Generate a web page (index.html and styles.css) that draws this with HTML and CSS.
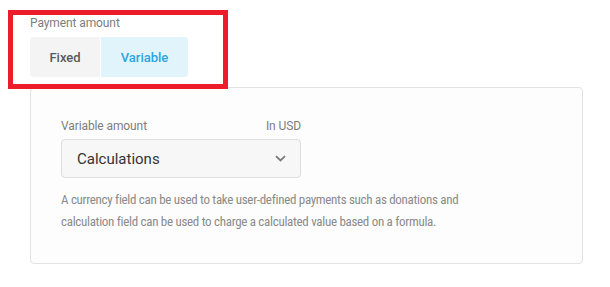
FILE: index.html
```html
<!DOCTYPE html>
<html>
<head>
<meta charset="utf-8">
<link rel="stylesheet" href="styles.css">
</head>
<body>
<div class="page">
  <div class="field-top">
    <div class="label">Payment amount</div>
    <div class="segmented">
      <span class="seg">Fixed</span>
      <span class="seg active">Variable</span>
    </div>
  </div>
  <div class="card">
    <div class="field">
      <div class="field-head">
        <span class="label">Variable amount</span>
        <span class="label">In USD</span>
      </div>
      <div class="select">
        <span>Calculations</span>
        <svg class="chev" width="11" height="7" viewBox="0 0 11 7"><path d="M1 1.2 L5.5 5.5 L10 1.2" fill="none" stroke="#7a7a7a" stroke-width="1.8"/></svg>
      </div>
    </div>
    <p class="desc">A currency field can be used to take user-defined payments such as donations and calculation field can be used to charge a calculated value based on a formula.</p>
  </div>
  <div class="highlight"></div>
</div>
</body>
</html>
```
FILE: styles.css
```css
* { box-sizing: border-box; }
html, body { margin: 0; padding: 0; background: #fff; }
body { font-family: Roboto, "Noto Sans", sans-serif; }
.page {
  position: relative;
  width: 610px;
  height: 287px;
  padding: 15px 27px 0 30px;
}
.label {
  font-size: 12px;
  line-height: 16px;
  color: #7d7d7d;
  font-stretch: 94%;
  letter-spacing: -0.1px;
}
.field-top .label { margin-bottom: 6px; }
.segmented {
  display: inline-flex;
  height: 40px;
  border-radius: 4px;
  overflow: hidden;
}
.seg {
  display: flex;
  align-items: center;
  justify-content: center;
  font-size: 13px;
  font-weight: 500;
  font-stretch: 94%;
  color: #5a5a5a;
  background: #f4f4f4;
  width: 70px;
}
.seg.active {
  width: 87px;
  margin-left: 1px;
  background: #e1f4fc;
  color: #2aa6df;
}
.card {
  margin-top: 10px;
  height: 177px;
  border: 1px solid #e2e2e2;
  border-radius: 4px;
  background: #fdfdfd;
  padding: 30px 30px;
}
.field { width: 240px; }
.field-head {
  display: flex;
  justify-content: space-between;
  margin-bottom: 5px;
}
.select {
  height: 39px;
  border: 1px solid #dedede;
  border-radius: 4px;
  background: #f7f7f7;
  display: flex;
  align-items: center;
  justify-content: space-between;
  padding: 0 14px 0 15px;
  font-size: 15px;
  font-stretch: 96%;
  color: #333;
}
.chev { display: block; }
.desc {
  margin: 11px 0 0;
  font-size: 13px;
  font-stretch: 86%;
  letter-spacing: -0.3px;
  line-height: 22px;
  color: #8a8a8a;
  width: 440px;
}
.highlight {
  position: absolute;
  left: 8px;
  top: 10px;
  width: 220px;
  height: 79px;
  border: 5px solid #ec1c2b;
}
```
